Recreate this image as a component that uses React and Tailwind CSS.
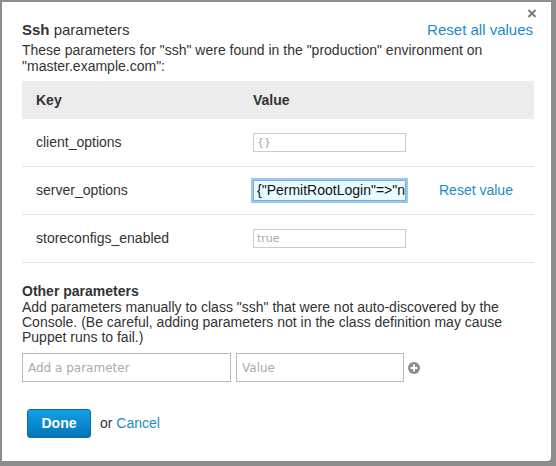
import React from "react";

const rows = [
  { key: "client_options", value: "{}" },
  { key: "server_options", value: '{"PermitRootLogin"=>"no"}', focused: true },
  { key: "storeconfigs_enabled", value: "true" },
];

export default function App() {
  return (
    <div className="w-[556px] h-[466px] bg-[#8d8d8d] pl-[2px] pt-[2px] font-['Liberation_Sans',Arial,sans-serif] text-[#333]">
      <div className="relative w-[549px] h-[459px] bg-white rounded-br-[4px] pl-[20px] pr-[17px]">
        {/* close */}
        <span className="absolute right-[14px] top-[3px] text-[17px] font-bold text-[#777] leading-none">×</span>

        <div className="flex items-end justify-between pt-[17px] h-[37px]">
          <h2 className="text-[15px] leading-[18px]">
            <b>Ssh</b> parameters
          </h2>
          <a className="text-[15px] leading-[18px] text-[#1b8ccb] mr-[1px]">Reset all values</a>
        </div>

        <p className="text-[14px] leading-[16px] mt-[3px]">
          These parameters for "ssh" were found in the "production" environment on
          <br />
          "master.example.com":
        </p>

        <div className="mt-[7px] w-[512px]">
          <div className="flex items-center h-[38px] bg-[#ececec] text-[14px] font-bold">
            <div className="w-[231px] pl-[14px]">Key</div>
            <div>Value</div>
          </div>
          {rows.map((r) => (
            <div key={r.key} className="flex items-center h-[48px] border-b border-[#e6e6e6] text-[14px]">
              <div className="w-[231px] pl-[14px]">{r.key}</div>
              {r.focused ? (
                <input
                  readOnly
                  value={r.value}
                  className="w-[153px] h-[21px] border border-[#7aaee8] shadow-[0_0_0_2px_#9cc6f2] bg-[#e8fbff] pl-[3px] text-[14px] text-[#111] font-['Liberation_Sans',Arial,sans-serif] outline-none"
                />
              ) : (
                <input
                  readOnly
                  value={r.value}
                  className="w-[153px] h-[19px] border border-[#cccccc] pl-[3px] text-[11px] text-[#aaa] font-['DejaVu_Sans',sans-serif] outline-none"
                />
              )}
              {r.focused && <a className="ml-[33px] text-[14px] text-[#1b8ccb]">Reset value</a>}
            </div>
          ))}
        </div>

        <div className="mt-[21px] text-[14px] leading-[15px]">
          <div className="font-bold mb-[1px]">Other parameters</div>
          <p>
            Add parameters manually to class "ssh" that were not auto-discovered by the
            <br />
            Console. (Be careful, adding parameters not in the class definition may cause
            <br />
            Puppet runs to fail.)
          </p>
        </div>

        <div className="flex items-center mt-[8px]">
          <input
            readOnly
            placeholder="Add a parameter"
            className="w-[209px] h-[29px] border border-[#bbb] pl-[5px] text-[12px] placeholder:text-[#aaa] font-['DejaVu_Sans',sans-serif] outline-none"
          />
          <input
            readOnly
            placeholder="Value"
            className="ml-[5px] w-[168px] h-[29px] border border-[#bbb] pl-[5px] text-[12px] placeholder:text-[#aaa] font-['DejaVu_Sans',sans-serif] outline-none"
          />
          <svg className="ml-[4px]" width="12" height="12" viewBox="0 0 12 12">
            <circle cx="6" cy="6" r="6" fill="#8a8a8a" />
            <rect x="2.5" y="5" width="7" height="2" fill="#fff" />
            <rect x="5" y="2.5" width="2" height="7" fill="#fff" />
          </svg>
        </div>

        <div className="flex items-center mt-[27px] ml-[5px]">
          <button className="w-[64px] h-[29px] rounded-[3px] border border-[#0a6aa6] bg-gradient-to-b from-[#14a0e6] to-[#0574b8] text-white text-[14px] font-bold">
            Done
          </button>
          <span className="ml-[9px] text-[14px]">
            or <a className="text-[#1b8ccb]">Cancel</a>
          </span>
        </div>
      </div>
    </div>
  );
}
